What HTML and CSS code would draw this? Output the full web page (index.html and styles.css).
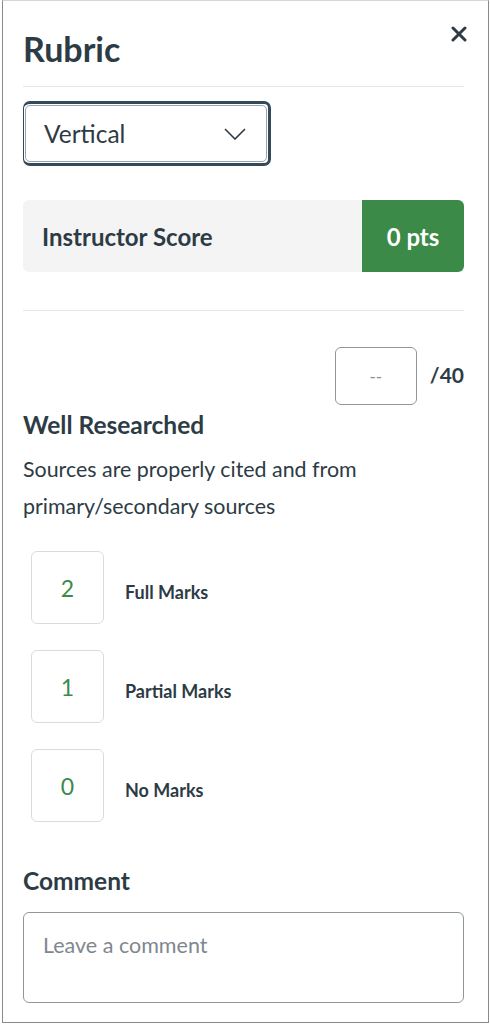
FILE: index.html
```html
<!DOCTYPE html>
<html>
<head>
<meta charset="utf-8">
<link rel="stylesheet" href="styles.css">
</head>
<body>
<div class="frame">
  <header class="header">
    <h1 class="title">Rubric</h1>
    <button class="close" aria-label="Close">
      <svg width="16" height="16" viewBox="0 0 16 16"><path d="M2 2 L14 14 M14 2 L2 14" stroke="#2d3b45" stroke-width="3" stroke-linecap="round"/></svg>
    </button>
  </header>
  <div class="divider"></div>
  <div class="select-ring">
    <div class="select">
      <span class="select-value">Vertical</span>
      <svg class="chev" width="22" height="12" viewBox="0 0 22 12"><path d="M1 1 L11 11 L21 1" fill="none" stroke="#2d3b45" stroke-width="1.6"/></svg>
    </div>
  </div>
  <div class="score-bar">
    <span class="score-label">Instructor Score</span>
    <span class="score-pts">0 pts</span>
  </div>
  <div class="divider divider-2"></div>
  <div class="criterion-head">
    <div class="pts-input">--</div>
    <span class="pts-total">/40</span>
  </div>
  <h2 class="crit-title">Well Researched</h2>
  <p class="crit-desc">Sources are properly cited and from primary/secondary sources</p>
  <div class="ratings">
    <div class="rating"><div class="rating-box">2</div><span class="rating-label">Full Marks</span></div>
    <div class="rating"><div class="rating-box">1</div><span class="rating-label">Partial Marks</span></div>
    <div class="rating"><div class="rating-box">0</div><span class="rating-label">No Marks</span></div>
  </div>
  <h2 class="comment-title">Comment</h2>
  <div class="comment-box">Leave a comment</div>
</div>
</body>
</html>
```
FILE: styles.css
```css
* { box-sizing: border-box; }
html, body { margin: 0; padding: 0; background: #fff; }
body { font-family: Lato, "Noto Sans", sans-serif; color: #2d3b45; }
.frame {
  margin: 0 1px 0 2px;
  height: 1023px;
  border: 1px solid #8a8a8a;
  border-top-color: #d6d6d6;
  padding: 0 24px 0 20px;
  background: #fff;
}
.header { display: flex; justify-content: space-between; align-items: flex-start; padding-top: 28px; height: 85px; }
.title { margin: 0; font-size: 34px; line-height: 40px; font-weight: 700; }
.close { border: 0; background: none; padding: 0; margin: -3px -3px 0 0; width: 16px; height: 16px; }
.close svg { display: block; }
.divider { height: 1px; background: #e6e6e6; }
.select-ring {
  margin-top: 14px;
  width: 248px; height: 65px;
  border: 3px solid #34495a;
  border-left-width: 1px;
  border-radius: 7px;
  padding: 1px;
}
.select {
  height: 100%;
  border: 1px solid #9aa3aa;
  border-radius: 5px;
  display: flex; align-items: center; justify-content: space-between;
  padding: 0 20px 0 18px;
}
.select-value { font-size: 24.5px; }
.chev { display: block; }
.score-bar {
  margin-top: 34px;
  height: 72px;
  display: flex; align-items: stretch;
  background: #f4f4f5;
  border-radius: 6px;
  overflow: hidden;
}
.score-label { flex: 1; display: flex; align-items: center; padding-left: 19px; font-weight: 700; font-size: 24px; }
.score-pts { width: 102px; background: #3b8a47; color: #fff; font-weight: 700; font-size: 24px; display: flex; align-items: center; justify-content: center; }
.divider-2 { margin-top: 38px; }
.criterion-head { margin-top: 36px; display: flex; justify-content: flex-end; align-items: center; gap: 13px; }
.pts-input {
  width: 82px; height: 58px;
  border: 1px solid #8f979d; border-radius: 6px;
  display: flex; align-items: center; justify-content: center;
  color: #8a9197; font-size: 17px;
}
.pts-total { font-size: 21px; font-weight: 700; margin-top: -4px; }
.crit-title { margin: 5px 0 0; font-size: 24.5px; line-height: 30px; font-weight: 700; }
.crit-desc { margin: 11px 0 0; font-size: 21.4px; line-height: 37px; }
.ratings { margin-top: 26px; padding-left: 8px; display: flex; flex-direction: column; gap: 26px; }
.rating { display: flex; align-items: center; gap: 21px; }
.rating-box {
  width: 73px; height: 73px;
  border: 1px solid #d9dcde; border-radius: 6px;
  display: flex; align-items: center; justify-content: center;
  color: #3b8a47; font-size: 23px;
}
.rating-label { font-weight: 700; font-size: 18px; margin-top: 8px; }
.comment-title { margin: 44px 0 0; font-size: 24.5px; line-height: 30px; font-weight: 700; }
.comment-box {
  margin-top: 16px;
  height: 91px;
  border: 1px solid #8f979d; border-radius: 6px;
  padding: 19px 19px;
  font-size: 21.5px; line-height: 26px;
  color: #7f878e;
}
```
